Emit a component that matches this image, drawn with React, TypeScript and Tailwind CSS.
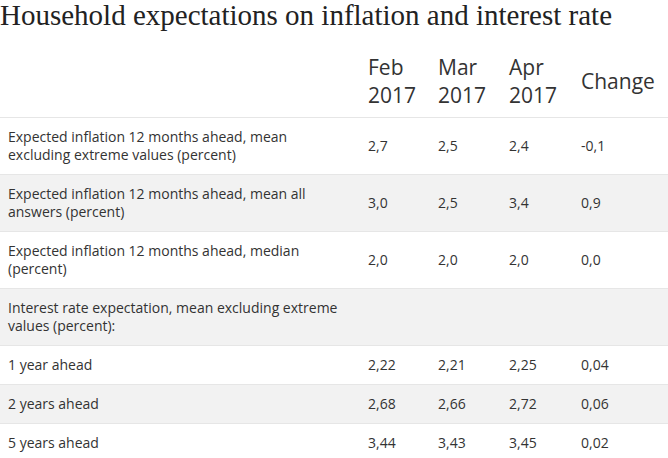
import React from 'react';

type Row = {
  label: string;
  values?: string[];
};

const rows: Row[] = [
  { label: 'Expected inflation 12 months ahead, mean excluding extreme values (percent)', values: ['2,7', '2,5', '2,4', '-0,1'] },
  { label: 'Expected inflation 12 months ahead, mean all answers (percent)', values: ['3,0', '2,5', '3,4', '0,9'] },
  { label: 'Expected inflation 12 months ahead, median (percent)', values: ['2,0', '2,0', '2,0', '0,0'] },
  { label: 'Interest rate expectation, mean excluding extreme values (percent):' },
  { label: '1 year ahead', values: ['2,22', '2,21', '2,25', '0,04'] },
  { label: '2 years ahead', values: ['2,68', '2,66', '2,72', '0,06'] },
  { label: '5 years ahead', values: ['3,44', '3,43', '3,45', '0,02'] },
];

const months = [
  ['Feb', '2017'],
  ['Mar', '2017'],
  ['Apr', '2017'],
];

export default function App() {
  return (
    <div className="w-[668px] bg-white text-[#333] overflow-hidden">
      <h1 className="text-[29px] leading-[30px] font-['Liberation_Serif',Georgia,serif] text-[#222] whitespace-nowrap">
        Household expectations on inflation and interest rate
      </h1>
      <table className="mt-[15px] w-full table-fixed font-['Open_Sans',sans-serif]">
        <colgroup>
          <col className="w-[360px]" />
          <col className="w-[70px]" />
          <col className="w-[71px]" />
          <col className="w-[72px]" />
          <col />
        </colgroup>
        <thead>
          <tr className="border-b border-[#e6e6e6]">
            <th className="py-2 pl-2" />
            {months.map(([m, y]) => (
              <th key={m} className="pt-2 pb-[8px] pl-2 text-left align-middle font-normal text-[21px] leading-[28px]">
                {m}
                <br />
                {y}
              </th>
            ))}
            <th className="pl-2 text-left align-middle font-normal text-[21px] leading-[28px]">Change</th>
          </tr>
        </thead>
        <tbody className="text-[14px] leading-[18px]">
          {rows.map((r, i) => (
            <tr key={i} className={`border-b border-[#e6e6e6] ${i % 2 === 1 ? 'bg-[#f2f2f2]' : 'bg-white'}`}>
              <td className="py-[10px] pl-2 pr-4 align-middle">{r.label}</td>
              {r.values ? (
                r.values.map((v, j) => (
                  <td key={j} className="py-[10px] pl-2 align-middle">
                    {v}
                  </td>
                ))
              ) : (
                <td colSpan={4} />
              )}
            </tr>
          ))}
        </tbody>
      </table>
    </div>
  );
}
